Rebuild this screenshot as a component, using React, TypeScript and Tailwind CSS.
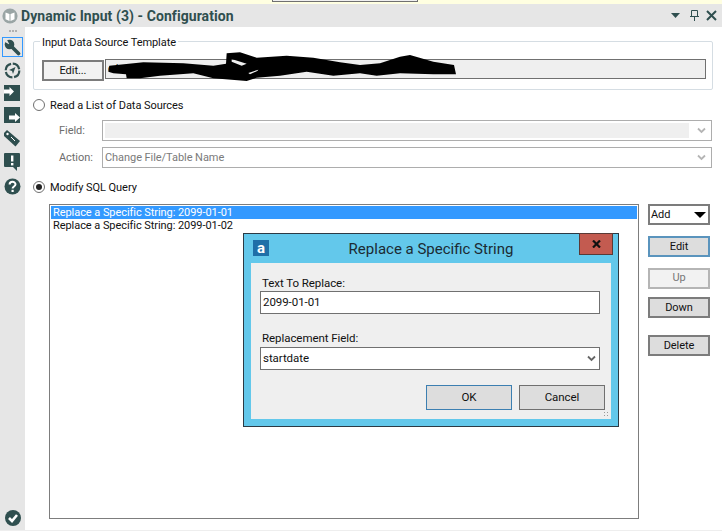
const font = { fontFamily: '"Roboto", "Liberation Sans", sans-serif' };

function Btn({ label, cls = "border-[#7c7c7c] bg-[#dddddd]" }: { label: string; cls?: string }) {
  return (
    <div className={`w-[62px] h-[21px] flex items-center justify-center border-2 text-[11px] leading-none text-[#111] ${cls}`}>
      {label}
    </div>
  );
}

function Chevron({ color = "#b5b5b5" }: { color?: string }) {
  return (
    <svg width="9" height="7" viewBox="0 0 9 7" className="shrink-0">
      <path d="M1 1.5 L4.5 5 L8 1.5" fill="none" stroke={color} strokeWidth="1.8" />
    </svg>
  );
}

function SideIcons() {
  const c = "#2f4f4f";
  return (
    <div className="w-[25px] shrink-0 bg-[#e6e6e6] flex flex-col items-center pt-[3px]">
      <div className="flex gap-[1px] h-[5px] mb-[2px]">
        <span className="w-[2px] h-[2px] bg-[#b0b0b0]" />
        <span className="w-[2px] h-[2px] bg-[#b0b0b0]" />
        <span className="w-[2px] h-[2px] bg-[#b0b0b0]" />
      </div>
      <div className="w-[21px] h-[20px] border border-[#3399ff] flex items-center justify-center">
        <svg width="17" height="17" viewBox="0 0 17 17">
          <circle cx="5.5" cy="5.5" r="4.8" fill={c} />
          <path d="M5.5 5.5 L0 2.5 V0 H2.5 Z" fill="#e6e6e6" />
          <path d="M6.5 6.5 L14.5 14.5" stroke={c} strokeWidth="3.6" strokeLinecap="round" />
        </svg>
      </div>
      <svg width="17" height="17" viewBox="0 0 17 17" className="mt-[5px]">
        <circle cx="8.5" cy="8.5" r="6.8" fill="none" stroke={c} strokeWidth="2.2" strokeDasharray="9 1.7" />
        <path d="M11.5 5 L9 12 L8 9 L5 8 Z" fill={c} />
      </svg>
      <svg width="17" height="17" viewBox="0 0 17 17" className="mt-[5px]">
        <path d="M0 1 H16 V17 H0 Z" fill={c} />
        <path d="M0 5.5 H5.5 V3 L10 7.5 L5.5 12 V9.5 H0 Z" fill="#fff" />
      </svg>
      <svg width="17" height="17" viewBox="0 0 17 17" className="mt-[6px]">
        <path d="M0 0 H16 V16 H0 Z" fill={c} />
        <path d="M5 8.5 H11 V6 L16 10.5 L11 15 V12.5 H5 Z" fill="#fff" />
      </svg>
      <svg width="17" height="17" viewBox="0 0 17 17" className="mt-[6px]">
        <path d="M0 3 L3 0 L16 11 L11.5 16.5 L0 6 Z" fill={c} />
        <circle cx="3.5" cy="4" r="1.2" fill="#fff" />
        <path d="M7 7 L11 11" stroke="#fff" strokeWidth="1" />
      </svg>
      <svg width="17" height="19" viewBox="0 0 17 19" className="mt-[6px]">
        <path d="M1 0 H15 Q16 0 16 1 V13 Q16 14 15 14 H13 V18 L9 14 H1 Q0 14 0 13 V1 Q0 0 1 0 Z" fill={c} />
        <rect x="7" y="2.5" width="2.4" height="6" fill="#fff" />
        <rect x="7" y="10" width="2.4" height="2.4" fill="#fff" />
      </svg>
      <svg width="17" height="17" viewBox="0 0 17 17" className="mt-[6px]">
        <circle cx="8.5" cy="8.5" r="8" fill={c} />
        <path d="M5.6 6.5 C5.6 3 11.5 3 11.5 6.3 C11.5 8.5 8.6 8.5 8.6 10.5" fill="none" stroke="#fff" strokeWidth="2" />
        <rect x="7.5" y="11.8" width="2.2" height="2.2" fill="#fff" />
      </svg>
      <svg width="16" height="16" viewBox="0 0 16 16" className="mt-auto mb-[4px]">
        <circle cx="8" cy="8" r="8" fill={c} />
        <path d="M4 8 L7 11 L12 5" fill="none" stroke="#fff" strokeWidth="2.6" />
      </svg>
    </div>
  );
}

function Radio({ on, label }: { on?: boolean; label: string }) {
  return (
    <div className="flex items-center gap-[5px] h-[14px]">
      <span className="w-[12px] h-[12px] rounded-full border border-[#707070] bg-white flex items-center justify-center">
        {on && <span className="w-[6px] h-[6px] rounded-full bg-[#222]" />}
      </span>
      <span className="text-[11px] leading-none text-[#111]">{label}</span>
    </div>
  );
}

function Dialog() {
  return (
    <div className="absolute left-[243px] top-[233px] w-[376px] h-[194px] bg-[#63c8eb] border border-[#2c3a44] flex flex-col">
      <div className="h-[29px] flex items-center relative shrink-0">
        <div className="absolute left-[9px] top-[6px] w-[16px] h-[16px] bg-[#1f6fa8] flex items-end justify-center text-[15px] leading-[16px] font-bold text-white">a</div>
        <span className="w-full text-center text-[15px] leading-none text-[#1c2b33] pt-[2px] tracking-normal">Replace a Specific String</span>
        <div className="absolute right-[5px] -top-[1px] w-[34px] h-[22px] bg-[#c35b50] border border-[#5a3a36] flex items-center justify-center">
          <svg width="9" height="8" viewBox="0 0 9 8"><path d="M1 0.5 L8 7.5 M8 0.5 L1 7.5" stroke="#111" strokeWidth="2.2" /></svg>
        </div>
      </div>
      <div className="mx-[7px] h-[156px] bg-[#efefef] pl-[9px] pr-[11px] pt-[11px] relative flex flex-col">
        <span className="text-[11.5px] leading-[16px] text-[#111] pl-[2px] pt-[1px]">Text To Replace:</span>
        <div className="h-[23px] bg-white border border-[#707070] flex items-center px-[2px] pt-[1px] text-[11.5px] text-[#111]">2099-01-01</div>
        <span className="mt-[15px] text-[11.5px] leading-[16px] text-[#111] pl-[2px] pt-[1px]">Replacement Field:</span>
        <div className="mt-[1px] h-[23px] bg-white border border-[#707070] flex items-center justify-between px-[2px] text-[11.5px] text-[#111]">
          <span className="pt-[1px]">startdate</span>
          <span className="mr-[1px] flex"><Chevron color="#666" /></span>
        </div>
        <div className="mt-[15px] flex justify-end gap-[7px] -mr-[5px]">
          <div className="w-[86px] h-[25px] flex items-center justify-center bg-[#dddddd] border border-[#3c7fb1] text-[11.5px] text-[#111]">OK</div>
          <div className="w-[86px] h-[25px] flex items-center justify-center bg-[#dddddd] border border-[#707070] text-[11.5px] text-[#111]">Cancel</div>
        </div>
        <div className="absolute right-[1px] bottom-[1px] w-[7px] h-[7px] bg-[radial-gradient(#999_1px,transparent_1px)] bg-[length:3px_3px]" />
      </div>
    </div>
  );
}

export default function App() {
  return (
    <div style={font} className="relative w-[722px] h-[531px] overflow-hidden bg-white flex flex-col tracking-[-0.06px]">
      <div className="h-[4px] bg-[#ffffe1] shrink-0 pl-[272px]">
        <div className="w-[146px] h-[2px] bg-[#f0f0f0] border-b border-x border-[#707070]" />
      </div>
      <div className="h-[23px] shrink-0 bg-[#e6e6e6] flex items-center pl-[2px] pr-[5px]">
        <svg width="16" height="16" viewBox="0 0 16 16" className="mr-[3px]">
          <circle cx="8" cy="8" r="7.6" fill="#9aa5a5" />
          <path d="M3.5 4.5 L7.5 6 V13 L3.5 11.2 Z M12.5 4.5 L8.5 6 V13 L12.5 11.2 Z" fill="#fff" />
        </svg>
        <span className="text-[14px] leading-none font-bold text-[#2f4f4f] tracking-[0.07px]">Dynamic Input (3) - Configuration</span>
        <div className="ml-auto flex items-center">
          <svg width="9" height="5" viewBox="0 0 9 5" className="mr-[10px]"><path d="M0 0 H9 L4.5 5 Z" fill="#2f4f4f" /></svg>
          <svg width="9" height="11" viewBox="0 0 9 11" className="mr-[7px]"><path d="M1.5 .5 H7.5 V6.5 H1.5 Z M0 6.5 H9 M4.5 6.5 V11" fill="none" stroke="#2f4f4f" /></svg>
          <svg width="11" height="11" viewBox="0 0 11 11"><path d="M1 1 L10 10 M10 1 L1 10" stroke="#2f4f4f" strokeWidth="2" /></svg>
        </div>
      </div>
      <div className="flex-1 flex min-h-0 border-b border-[#eeeeee]">
        <SideIcons />
        <div className="flex-1 min-w-0 pl-[8px] pr-[9px] pt-[14px] flex flex-col">
          <div className="relative h-[49px] border border-[#d5dde3] rounded-[2px] pl-[8px] pr-[6px] pt-[18px]">
            <span className="absolute left-[6px] -top-[6px] bg-white px-[2px] text-[11px] leading-[14px] text-[#111]">Input Data Source Template</span>
            <div className="flex items-start gap-[1px]">
              <Btn label="Edit..." cls="bg-[#f2f2f2] border-[#7c7c7c]" />
              <div className="flex-1 h-[20px] -mt-[1px] bg-[#efefef] border border-[#707070] text-[11px] leading-[18px] px-[2px] text-[#111]">c:\</div>
            </div>
          </div>
          <div className="mt-[8px]"><Radio label="Read a List of Data Sources" /></div>
          <div className="mt-[8px] flex items-center h-[21px] pl-[26px] pr-[1px]">
            <span className="w-[43px] pt-[2px] text-[11px] text-[#6d6d6d]">Field:</span>
            <div className="flex-1 h-[21px] border border-[#adadad] flex items-center justify-between p-[2px] pr-[5px]">
              <div className="h-full w-[calc(100%-17px)] bg-[#efefef]" />
              <Chevron />
            </div>
          </div>
          <div className="mt-[6px] flex items-center h-[21px] pl-[26px] pr-[1px]">
            <span className="w-[43px] pt-[2px] text-[11px] text-[#6d6d6d]">Action:</span>
            <div className="flex-1 h-[21px] border border-[#adadad] flex items-center justify-between pl-[2px] pr-[5px] text-[11px] text-[#7a7a7a]">
              <span className="pt-[2px]">Change File/Table Name</span>
              <Chevron />
            </div>
          </div>
          <div className="mt-[12px]"><Radio on label="Modify SQL Query" /></div>
          <div className="mt-[10px] flex items-start flex-1 pl-[16px] min-h-0">
            <div className="w-[590px] h-[315px] border border-[#7d7d7d] p-[1px] pr-0 text-[11px] leading-[13px] text-[#111] shrink-0">
              <div className="bg-[#3399ff] text-white h-[13px] mr-[1px] pl-[2px]">Replace a Specific String: 2099-01-01</div>
              <div className="pl-[2px]">Replace a Specific String: 2099-01-02</div>
            </div>
            <div className="ml-[9px] flex flex-col">
              <div className="w-[62px] h-[21px] border-2 border-[#7c7c7c] bg-white flex items-center justify-between pl-[1px] pr-[2px] text-[11px] text-[#111]">
                <span className="pt-[1px]">Add</span>
                <svg width="12" height="6" viewBox="0 0 12 6"><path d="M0 0 H12 L6 6 Z" fill="#000" /></svg>
              </div>
              <div className="mt-[11px]"><Btn label="Edit" cls="bg-[#dddddd] border-[#5a94bd]" /></div>
              <div className="mt-[11px]"><div className="w-[62px] h-[21px] flex items-center justify-center bg-[#f2f2f2] border-2 border-[#b5b5b5] text-[11px] text-[#777]">Up</div></div>
              <div className="mt-[8px]"><Btn label="Down" /></div>
              <div className="mt-[17px]"><Btn label="Delete" /></div>
            </div>
          </div>
        </div>
      </div>
      <svg width="370" height="45" viewBox="0 0 1110 135" className="absolute left-[100px] top-[45px]">
        <path fillRule="evenodd" d="M28 62 L130 52 L250 55 L340 62 L378 56 L380 25 L420 22 L470 38 L560 32 L640 38 L720 52 L780 60 L840 55 L900 35 L930 30 L1000 50 L1062 60 L1068 88 L1000 88 L900 85 L830 92 L780 85 L700 92 L620 80 L540 92 L470 98 L440 108 L340 100 L280 85 L180 92 L120 100 L80 100 L78 88 L40 85 L25 80 Z M395 42 L440 56 L425 62 L395 50 Z M445 84 L475 74 L472 78 L450 88 Z" fill="#000" />
      </svg>
      <Dialog />
    </div>
  );
}
